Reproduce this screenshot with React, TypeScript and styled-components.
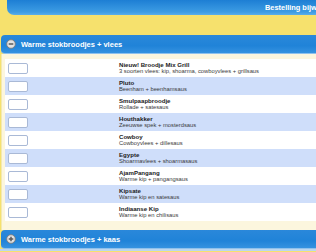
import * as React from "react"
import styled, { createGlobalStyle } from "styled-components"

const GlobalStyle = createGlobalStyle`
    html, body {
        margin: 0;
        padding: 0;
        background: #f6e16d;
        font-family: "Liberation Sans", Arial, sans-serif;
    }
`

interface Product {
    name: string
    description: string
}

const PRODUCTS: Product[] = [
    { name: "Nieuw! Broodje Mix Grill", description: "3 soorten vlees: kip, shoarma, cowboyvlees + grillsaus" },
    { name: "Pluto", description: "Beenham + beenhamsaus" },
    { name: "Smulpaapbroodje", description: "Rollade + satesaus" },
    { name: "Houthakker", description: "Zeeuwse spek + mosterdsaus" },
    { name: "Cowboy", description: "Cowboyvlees + dillesaus" },
    { name: "Egypte", description: "Shoarmavlees + shoarmasaus" },
    { name: "AjamPangang", description: "Warme kip + pangangsaus" },
    { name: "Kipsate", description: "Warme kip en satesaus" },
    { name: "Indiaanse Kip", description: "Warme kip en chilisaus" }
]

const ToggleIcon: React.FC<{ open: boolean }> = ({ open }) => (
    <svg width={10} height={10} viewBox="0 0 10 10">
        <circle cx={5} cy={5} r={4.3} fill="#e2e2e2" stroke="#7d7d7d" strokeWidth={0.9} />
        <line x1={2.7} y1={5} x2={7.3} y2={5} stroke="#5a5a5a" strokeWidth={1.5} />
        {!open && <line x1={5} y1={2.7} x2={5} y2={7.3} stroke="#5a5a5a" strokeWidth={1.5} />}
    </svg>
)

const App: React.FC = () => {
    return (
        <Page>
            <GlobalStyle />
            <TopBar>
                <span>Bestelling bijwerken</span>
            </TopBar>
            <SectionHeader first>
                <ToggleIcon open />
                <h3>Warme stokbroodjes + vlees</h3>
            </SectionHeader>
            <Panel>
                {PRODUCTS.map((p, i) => (
                    <ProductRow key={p.name} striped={i % 2 === 1}>
                        <QtyInput type="text" />
                        <div>
                            <ProductName>{p.name}</ProductName>
                            <ProductDesc>{p.description}</ProductDesc>
                        </div>
                    </ProductRow>
                ))}
            </Panel>
            <SectionHeader>
                <ToggleIcon open={false} />
                <h3>Warme stokbroodjes + kaas</h3>
            </SectionHeader>
            <BottomEdge />
        </Page>
    )
}

export default App

const Page = styled.div`
    width: 316px;
    height: 252px;
    overflow: hidden;
    display: flex;
    flex-direction: column;
`

const TopBar = styled.div`
    margin-left: 7px;
    height: 15px;
    flex-shrink: 0;
    display: flex;
    align-items: center;
    padding-left: 258px;
    overflow: hidden;
    white-space: nowrap;
    background: linear-gradient(#1d7ed4, #3d9ce3 80%, #5aaeea);
    border-bottom-left-radius: 7px;

    span {
        color: #ffffff;
        font-weight: bold;
        font-size: 7.4px;
    }
`

interface SectionHeaderProps {
    first?: boolean
}

const SectionHeader = styled.div<SectionHeaderProps>`
    margin-top: ${props => (props.first ? "20px" : "0")};
    margin-left: 1px;
    height: 18px;
    flex-shrink: 0;
    display: flex;
    align-items: center;
    gap: 5px;
    padding-left: 5px;
    background: linear-gradient(#2a88da, #2083d8 60%, #3592e0);
    border-bottom: 1px solid #8fc1ec;
    border-radius: 4px 0 0 4px;

    h3 {
        margin: 0;
        color: #ffffff;
        font-weight: bold;
        font-size: 7.5px;
        white-space: nowrap;
    }
`

const Panel = styled.div`
    margin-left: 1px;
    flex-shrink: 0;
    padding: 5px 0 9px 3px;
    background: #fcf6de;
    border-left: 1px solid #f3e9b0;
`

interface ProductRowProps {
    striped: boolean
}

const ProductRow = styled.div<ProductRowProps>`
    height: 18px;
    display: grid;
    grid-template-columns: 20px 1fr;
    column-gap: 91px;
    align-items: center;
    padding-left: 3px;
    background: ${props => (props.striped ? "#cfdefa" : "#ffffff")};
`

const QtyInput = styled.input`
    box-sizing: border-box;
    width: 20px;
    height: 11px;
    margin: 0;
    padding: 0;
    background: #ffffff;
    border: 1px solid #a9b9d6;
    border-radius: 2px;
`

const ProductName = styled.div`
    font-size: 6.1px;
    line-height: 7px;
    font-weight: bold;
    color: #1c1c1c;
    white-space: nowrap;
`

const ProductDesc = styled.div`
    font-size: 5.8px;
    line-height: 7px;
    color: #3a3a3a;
    white-space: nowrap;
`

const BottomEdge = styled.div`
    height: 2px;
    background: #bcd6ef;
`
